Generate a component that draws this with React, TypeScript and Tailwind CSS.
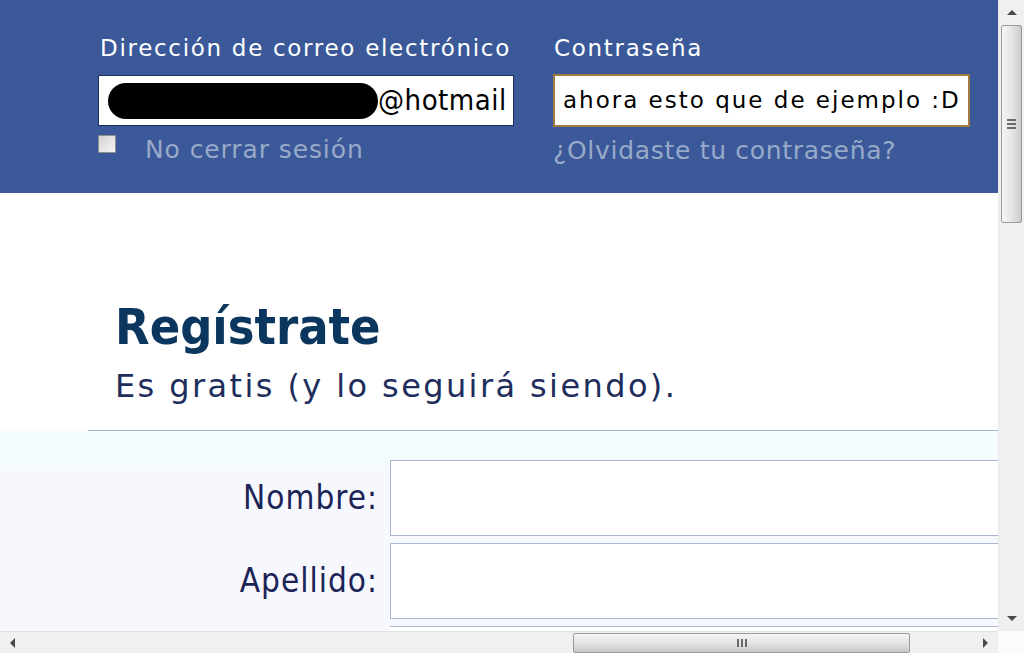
import React from "react";

const sans = "font-['DejaVu_Sans','Liberation_Sans',sans-serif]";
const narrow = "font-['DejaVu_Sans_Condensed','DejaVu_Sans',sans-serif] [font-stretch:condensed]";

function HScrollbar() {
  return (
    <div className="flex h-[22px] w-full">
      <div className="relative flex h-full flex-1 items-center border-t border-[#e2e2e2] bg-[#f0f0f0]">
        <span className="absolute left-[10px] top-[6px] h-0 w-0 border-y-[5px] border-r-[5px] border-y-transparent border-r-[#4a4a4a]" />
        <div className="absolute left-[573px] top-[1px] flex h-[20px] w-[337px] items-center justify-center rounded-[2px] border border-[#9a9a9a] bg-[linear-gradient(to_bottom,#f4f4f4_0%,#e4e4e4_50%,#c9c9c9_100%)]">
          <div className="flex gap-[2px]">
            <span className="h-[8px] w-[2px] bg-[#6a6a6a]" />
            <span className="h-[8px] w-[2px] bg-[#6a6a6a]" />
            <span className="h-[8px] w-[2px] bg-[#6a6a6a]" />
          </div>
        </div>
        <span className="absolute right-[10px] top-[6px] h-0 w-0 border-y-[5px] border-l-[5px] border-y-transparent border-l-[#4a4a4a]" />
      </div>
      <div className="h-full w-[26px] bg-[#fbfbfb]" />
    </div>
  );
}

function VScrollbar() {
  return (
    <div className="relative h-full w-[26px] border-l border-[#e8e8e8] bg-[#f0f0f0]">
      <span className="absolute left-[8px] top-[10px] h-0 w-0 border-x-[5px] border-b-[5px] border-x-transparent border-b-[#4a4a4a]" />
      <div className="absolute left-[2px] top-[25px] flex h-[198px] w-[21px] items-center justify-center rounded-[2px] border border-[#9a9a9a] bg-[linear-gradient(to_right,#f4f4f4_0%,#e6e6e6_50%,#cbcbcb_100%)]">
        <div className="flex flex-col gap-[2px]">
          <span className="h-[2px] w-[9px] bg-[#6a6a6a]" />
          <span className="h-[2px] w-[9px] bg-[#6a6a6a]" />
          <span className="h-[2px] w-[9px] bg-[#6a6a6a]" />
        </div>
      </div>
      <span className="absolute bottom-[10px] left-[8px] h-0 w-0 border-x-[5px] border-t-[5px] border-x-transparent border-t-[#4a4a4a]" />
    </div>
  );
}

function LoginBar() {
  return (
    <div className="flex h-[193px] shrink-0 gap-[39px] bg-[#3b5998] pl-[98px] pt-[34px]">
      <div className="flex w-[416px] flex-col">
        <label className="whitespace-nowrap pl-[2px] text-[23px] leading-[28px] tracking-[1.7px] text-white">
          Dirección de correo electrónico
        </label>
        <div className="mt-[13px] flex h-[51px] items-center border border-[#1d2f5c] bg-white pl-[9px]">
          <span className="h-[36px] w-[270px] rounded-[18px] bg-black" />
          <span className={`${narrow} text-[29px] tracking-[0.5px] text-black`}>@hotmail</span>
        </div>
        <div className="mt-[9px] flex items-start">
          <span className="h-[18px] w-[18px] border border-[#8f8f8f] bg-[linear-gradient(135deg,#d4d4d4,#f4f4f4)]" />
          <span className="ml-[29px] whitespace-nowrap text-[25px] leading-[30px] tracking-[0.9px] text-[#98a9ca]">
            No cerrar sesión
          </span>
        </div>
      </div>
      <div className="flex w-[417px] flex-col">
        <label className="pl-[1px] text-[23px] leading-[28px] tracking-[1.7px] text-white">Contraseña</label>
        <div className="mt-[12px] flex h-[53px] items-center border-2 border-[#a07b3e] bg-white pl-[8px]">
          <span className="whitespace-nowrap text-[23px] tracking-[2px] text-black">ahora esto que de ejemplo :D</span>
        </div>
        <span className="mt-[9px] whitespace-nowrap text-[25px] leading-[30px] tracking-[0.7px] text-[#98a9ca]">
          ¿Olvidaste tu contraseña?
        </span>
      </div>
    </div>
  );
}

function Field({ label }: { label: string }) {
  return (
    <div className="flex items-center">
      <span className={`w-[378px] text-right ${narrow} text-[33px] tracking-[1px] text-[#1c2456]`}>{label}</span>
      <div className="ml-[12px] h-[76px] flex-1 border border-r-0 border-[#a9b6d1] bg-white" />
    </div>
  );
}

export default function App() {
  return (
    <div className={`flex h-[653px] w-[1024px] flex-col overflow-hidden bg-white ${sans}`}>
      <div className="flex h-[631px] w-full">
        <div className="flex min-w-0 flex-1 flex-col overflow-hidden">
          <LoginBar />
          <div className="flex h-[237px] shrink-0 flex-col pl-[115px] pt-[104px]">
            <h1 className={`${narrow} whitespace-nowrap text-[50px] font-bold leading-[60px] text-[#0b365e]`}>Regístrate</h1>
            <p className="mt-[9px] whitespace-nowrap text-[32px] leading-[40px] tracking-[2.4px] text-[#1e2d5c]">
              Es gratis (y lo seguirá siendo).
            </p>
          </div>
          <div className="ml-[88px] h-px shrink-0 bg-[#a7b5d4]" />
          <div className="flex flex-1 flex-col bg-[#f6f8fe]">
            <div className="h-[35px] shrink-0 bg-[#f5fcfd]" />
            <div className="-mt-[6px] flex flex-col gap-[7px]">
              <Field label="Nombre:" />
              <Field label="Apellido:" />
              <div className="ml-[390px] h-[20px] border-t border-[#a9b6d1] bg-white" />
            </div>
          </div>
        </div>
        <VScrollbar />
      </div>
      <HScrollbar />
    </div>
  );
}
